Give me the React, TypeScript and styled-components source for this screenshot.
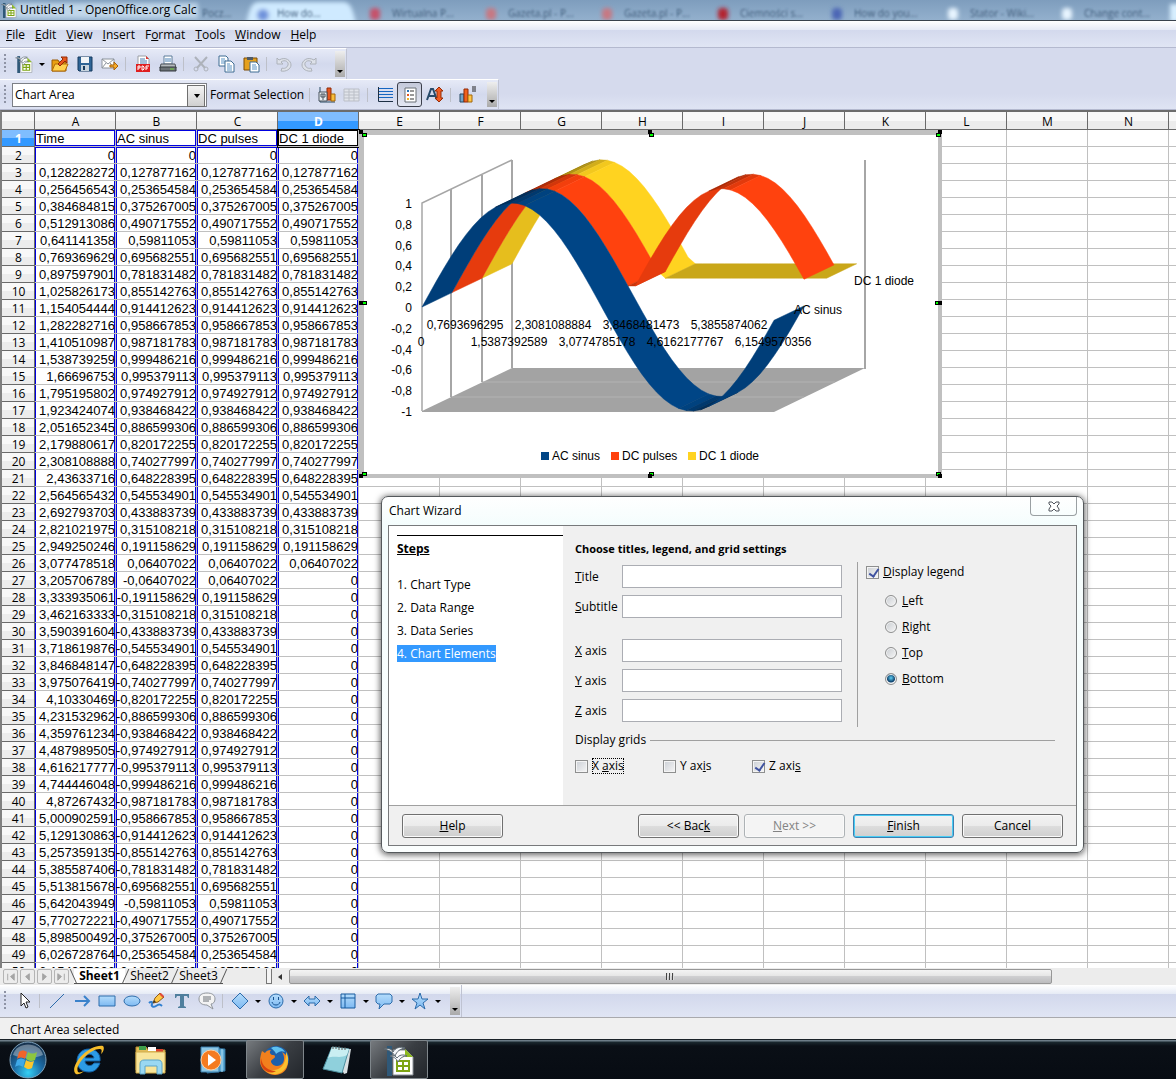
import React, { useState } from 'react';
import styled, { createGlobalStyle, css } from 'styled-components';

const UI_FONT = '"Open Sans", "Noto Sans", sans-serif';
const CELL_FONT = '"Liberation Sans", Arial, sans-serif';

const COLUMNS = ['A', 'B', 'C', 'D', 'E', 'F', 'G', 'H', 'I', 'J', 'K', 'L', 'M', 'N', 'O'];
const HEADINGS = ['Time', 'AC sinus', 'DC pulses', 'DC 1 diode'];
const SAMPLES = 49;
const STEP = (2 * Math.PI) / SAMPLES;

// one full period, t goes from 0 up to just before 2π
const times = Array.from({ length: SAMPLES }, (_, i) => i * STEP);
const fullWave = (t: number) => Math.sin(t);
const rectified = (t: number) => Math.abs(Math.sin(t));
const halfWave = (t: number) => Math.max(0, Math.sin(t));

const formatNumber = (value: number) => String(Number(value.toFixed(9))).replace('.', ',');

const dataRows = times.map((t) => [t, fullWave(t), rectified(t), halfWave(t)].map(formatNumber));

const GlobalStyle = createGlobalStyle`
  * {
    box-sizing: border-box;
  }

  body {
    margin: 0;
    overflow: hidden;
    background: #efefef;
  }

  button, input, select {
    font: inherit;
    color: inherit;
  }
`;

/* ---------- icons ---------- */

const OfficeMark = ({ size = 18 }: { size?: number }) => (
  <svg width={size} height={size} viewBox="0 0 32 32" aria-hidden="true">
    <rect x="4" y="2" width="5" height="30" fill="#2f5878" />
    <path d="M10 6h13l7 7v18H10z" fill="#fdfdfd" stroke="#8a9096" />
    <path d="M22 5l8 8h-8z" fill="#8dbb1e" />
    <path d="M13 16h14v12H13z" fill="#7da414" />
    <path d="M15 18h4v3h-4zM21 18h4v3h-4zM15 23h4v3h-4zM21 23h4v3h-4z" fill="#fff" />
    <path d="M1 5c5-1 8 0 9 3 2-4 7-6 12-4-5 1-8 3-10 8-2-4-6-6-11-7z" fill="#f4f7fa" stroke="#59656e" />
    <path d="M7 12c4-1 6 0 7 2 2-3 6-4 10-2-4 0-7 2-9 6-2-4-4-5-8-6z" fill="#f4f7fa" stroke="#59656e" />
  </svg>
);

const blue = '#7db9f2';
const navy = '#2d6cab';

const drawings = {
  open: (
    <>
      <path d="M1 5h6l1 2h7v9H1z" fill="#e9a013" stroke="#9a5a05" />
      <path d="M1 16l3-7h13l-3 7z" fill="#ffd24f" stroke="#b06a08" />
      <path d="M7 9l5-5-2-2h6v6l-2-2-5 5z" fill="#e8581c" stroke="#932a05" />
    </>
  ),
  save: (
    <>
      <path d="M2 2h14v14H3l-1-1z" fill="#2f6596" stroke="#173b5e" />
      <path d="M5 2h8v6H5z" fill="#f2f5f8" />
      <path d="M5 10h8v6H5z" fill="#c9d5df" />
      <path d="M7 11h2v4H7z" fill="#173b5e" />
    </>
  ),
  mail: (
    <>
      <path d="M1 4h12v9H1z" fill="#fff" stroke="#8d949c" />
      <path d="M1 4l6 5 6-5M1 13l4-5M13 13L9 8" fill="none" stroke="#8d949c" />
      <path d="M9 10h4V7l4 4-4 4v-3H9z" fill="#f6ac2c" stroke="#a9620a" />
    </>
  ),
  pdf: (
    <>
      <path d="M4 1h8l3 3v8H4z" fill="#fff" stroke="#9a9fa5" />
      <path d="M6 4h5M6 6h7M6 8h7" stroke="#4d7fb0" />
      <path d="M12 1l3 3h-3z" fill="#e03a33" />
      <path d="M2 9h14v8H2z" fill="#df1f1f" />
      <path d="M4 15v-4h2v2H4M8 11v4h1l1-1v-2l-1-1zM12 15v-4h3M12 13h2" fill="none" stroke="#fff" />
    </>
  ),
  print: (
    <>
      <path d="M5 1h8v8H5z" fill="#fff" stroke="#5c7c9a" />
      <path d="M6 4h6M6 6h6" stroke="#4b82b8" />
      <path d="M2 9h14l1 4H1z" fill="#b4b9bd" stroke="#4c5258" />
      <path d="M1 12h16v4H1z" fill="#6c7277" stroke="#33383c" />
      <path d="M11 14h4" stroke="#73d13d" />
    </>
  ),
  cut: (
    <g fill="none" stroke="#adb2ba">
      <path d="M3 2l10 11M15 2L5 13" strokeWidth="2" />
      <circle cx="4" cy="14" r="2" />
      <circle cx="14" cy="14" r="2" />
    </g>
  ),
  copy: (
    <>
      <path d="M2 1h7l2 2v8H2z" fill="#fff" stroke="#3f6d93" />
      <path d="M4 4h4M4 6h5M4 8h5" stroke="#5b93c5" />
      <path d="M8 6h6l3 3v8H8z" fill="#fff" stroke="#3f6d93" />
      <path d="M10 9h3M10 11h5M10 13h5M10 15h5" stroke="#5b93c5" />
    </>
  ),
  paste: (
    <>
      <path d="M2 3h13v12H2z" fill="#e5a11e" stroke="#7d4c06" />
      <path d="M5 2h6v3H5z" fill="#505a63" />
      <path d="M8 7h6l3 3v7H8z" fill="#fff" stroke="#3f6d93" />
      <path d="M10 10h4M10 12h5M10 14h5" stroke="#5b93c5" />
    </>
  ),
  undo: (
    <path d="M2 3v6h6L6 7c4-3 8 0 7 3s-4 4-6 3l-1 3c5 1 10-2 10-6S11 1 4 5z" fill="#dde1e9" stroke="#adb2ba" />
  ),
  redo: (
    <path d="M16 3v6h-6l2-2c-4-3-8 0-7 3s4 4 6 3l1 3c-5 1-10-2-10-6S7 1 14 5z" fill="#dde1e9" stroke="#adb2ba" />
  ),
  chartType: (
    <>
      <path d="M2 1v15h15" fill="none" stroke="#274862" />
      <path d="M9 2h4v12H9z" fill="#e4571f" stroke="#912b06" />
      <path d="M13 8h4v7h-4z" fill="#f9bd3c" stroke="#a2660a" />
      <path d="M1 6h8v9H1z" fill="#e9eef2" stroke="#48535d" />
      <path d="M5 8v6M3 8h4v3H3z" fill="none" stroke="#48535d" />
    </>
  ),
  table: (
    <g fill="#e1e4ea" stroke="#bbbfc7">
      <path d="M1 3h15v12H1z" />
      <path d="M1 6h15M1 9h15M1 12h15M6 3v12M11 3v12" />
    </g>
  ),
  hgrid: (
    <>
      <path d="M3 2.5h14M3 5.5h14M3 8.5h14M3 11.5h14" stroke="#1565c0" />
      <path d="M2.5 1v14.5H17" fill="none" stroke="#1c2f44" />
    </>
  ),
  legend: (
    <>
      <path d="M4 2h11v14H4z" fill="#fff" stroke="#6b7076" />
      <path d="M9 5h4M9 9h4M9 13h4" stroke="#333" />
      <path d="M6 4h2v2H6z" fill="#2974ba" />
      <path d="M6 8h2v2H6z" fill="#e4571f" />
      <path d="M6 12h2v2H6z" fill="#f0b429" />
    </>
  ),
  scale: (
    <>
      <path d="M1 14l4-11h2l4 11M3 10h6" fill="none" stroke="#284b6b" strokeWidth="2" />
      <path d="M13 1l4 4h-2v7h2l-4 4-4-4h2V5H9z" fill="#f05c25" stroke="#982c05" />
    </>
  ),
  bars: (
    <>
      <path d="M1 8h4v8H1z" fill="#6fa3c9" stroke="#274862" />
      <path d="M5 3h4v13H5z" fill="#f0601c" stroke="#912b06" />
      <path d="M9 9h4v7H9z" fill="#ffc545" stroke="#a2660a" />
      <path d="M13 1h4M13 3h4M13 5h4" stroke="#222" />
    </>
  ),
  pointer: <path d="M6 1v13l3-3 2 5 2-1-2-5h4z" fill="#fff" stroke="#222" />,
  line: <path d="M2 16L16 2" stroke={navy} strokeWidth="1" />,
  arrow: <path d="M2 9h14M11 4l5 5-5 5" fill="none" stroke="#3a82cb" strokeWidth="2" />,
  rect: <path d="M1 4h16v10H1z" fill="url(#shapeBlue)" stroke={navy} />,
  ellipse: <ellipse cx="9" cy="9" rx="8" ry="5" fill="url(#shapeBlue)" stroke={navy} />,
  pencil: (
    <>
      <path d="M1 11c2-2 4-1 3 1s1 4 4 2 4-2 6 0" fill="none" stroke="#2f7fd0" strokeWidth="2" />
      <path d="M5 11l2-5 5-5 4 4-6 5z" fill="#ffc845" stroke="#8f5c10" />
      <path d="M11 2l2-1 3 3-1 2z" fill="#e04c3c" />
      <path d="M5 11l1-3 2 2z" fill="#333" />
    </>
  ),
  text: <path d="M2 2h14v4h-1l-1-2h-3v10l2 1v1H5v-1l2-1V4H4L3 6H2z" fill="#4f7f9d" />,
  note: (
    <>
      <path d="M9 1c5 0 8 2 8 6 0 3-2 5-4 5l2 5-6-4c-5 0-8-2-8-6s3-6 8-6z" fill="#f3f3f3" stroke="#90959b" />
      <path d="M5 5h8M5 7h8M5 9h6" stroke="#6b7177" />
    </>
  ),
  diamond: <path d="M9 1l8 8-8 8-8-8z" fill="url(#shapeBlue)" stroke={navy} />,
  smiley: (
    <>
      <circle cx="9" cy="9" r="7" fill="url(#shapeBlue)" stroke={navy} />
      <path d="M5 10c1 4 7 4 8 0" fill="none" stroke="#17518e" />
      <path d="M6 5h1v3H6zM11 5h1v3h-1z" fill="#17518e" />
    </>
  ),
  doubleArrow: <path d="M1 9l5-5v3h6V4l5 5-5 5v-3H6v3z" fill="url(#shapeBlue)" stroke={navy} />,
  flowchart: (
    <>
      <path d="M2 2h14v14H2z" fill="url(#shapeBlue)" stroke="#175a9e" />
      <path d="M6 2v14M2 6h14" stroke="#175a9e" />
    </>
  ),
  callout: <path d="M3 2h12l2 2v6l-2 2H9l-5 5 1-5H3l-2-2V4z" fill="url(#shapeBlue)" stroke={navy} />,
  star: <path d="M9 1l2 6h6l-5 4 2 6-5-4-5 4 2-6-5-4h6z" fill="url(#shapeBlue)" stroke={navy} />,
};

type IconName = keyof typeof drawings | 'new';

const Icon = ({ name }: { name: IconName }) =>
  name === 'new' ? (
    <OfficeMark />
  ) : (
    <svg width="18" height="18" viewBox="0 0 18 18" aria-hidden="true">
      {drawings[name]}
    </svg>
  );

/* ---------- toolbars ---------- */

const toolLabels: Record<string, string> = { new: 'New', open: 'Open', save: 'Save', mail: 'E-mail', pdf: 'Export PDF' };

type ToolItem = { icon?: IconName; menu?: boolean; pressed?: boolean; separator?: boolean };

const standardTools: ToolItem[] = [
  { icon: 'new', menu: true },
  { icon: 'open' },
  { icon: 'save' },
  { icon: 'mail' },
  { separator: true },
  { icon: 'pdf' },
  { icon: 'print' },
  { separator: true },
  { icon: 'cut' },
  { icon: 'copy' },
  { icon: 'paste' },
  { separator: true },
  { icon: 'undo' },
  { icon: 'redo' },
];

const chartTools: ToolItem[] = [
  { separator: true },
  { icon: 'chartType' },
  { icon: 'table' },
  { separator: true },
  { icon: 'hgrid' },
  { icon: 'legend', pressed: true },
  { icon: 'scale' },
  { separator: true },
  { icon: 'bars' },
];

const drawTools: ToolItem[] = [
  { icon: 'pointer' },
  { separator: true },
  { icon: 'line' },
  { icon: 'arrow' },
  { icon: 'rect' },
  { icon: 'ellipse' },
  { icon: 'pencil' },
  { icon: 'text' },
  { icon: 'note' },
  { separator: true },
  { icon: 'diamond', menu: true },
  { icon: 'smiley', menu: true },
  { icon: 'doubleArrow', menu: true },
  { icon: 'flowchart', menu: true },
  { icon: 'callout', menu: true },
  { icon: 'star', menu: true },
];

const Tools = ({ items }: { items: ToolItem[] }) => (
  <>
    {items.map((item, index) =>
      item.separator || !item.icon ? (
        <Separator key={index} />
      ) : (
        <React.Fragment key={index}>
          <ToolButton $pressed={item.pressed} aria-label={toolLabels[item.icon] || item.icon}>
            <Icon name={item.icon} />
          </ToolButton>
          {item.menu && <DropArrow aria-label={`${item.icon} options`} />}
        </React.Fragment>
      )
    )}
  </>
);

/* ---------- chart ---------- */

const FRONT_X = 422;
const ZERO_Y = 307;
const UNIT_Y = 104;
const PX_PER_T = 352 / times[SAMPLES - 1];
const DEPTH_X = 30;
const DEPTH_Y = 14.4;

const shade = (rgb: number[], k: number) => `rgb(${rgb.map((c) => Math.round(c * k)).join(',')})`;

type RibbonProps = { fn: (t: number) => number; depth: number; rgb: number[]; count: number };

const Ribbon = ({ fn, depth, rgb, count }: RibbonProps) => {
  const point = (i: number, d: number) => [
    FRONT_X + times[i] * PX_PER_T + DEPTH_X * d,
    ZERO_Y - fn(times[i]) * UNIT_Y - DEPTH_Y * d,
  ];

  // neighbouring facets with the same light are drawn as one strip, so no seams show
  const strips: { color: string; from: number; to: number }[] = [];
  for (let i = 0; i < count - 1; i++) {
    const slope = (fn(times[i + 1]) - fn(times[i])) / STEP;
    // steeper than the depth axis means the underside faces the viewer
    const light = slope > 0.262 ? 0.9 : Math.min(1, Math.max(0.5, 0.79 - slope));
    const color = shade(rgb, light);
    const last = strips[strips.length - 1];
    if (last && last.color === color) {
      last.to = i + 1;
    } else {
      strips.push({ color, from: i, to: i + 1 });
    }
  }

  return (
    <g strokeWidth="0.5" strokeLinejoin="round">
      {strips.map(({ color, from, to }) => {
        const indexes = Array.from({ length: to - from + 1 }, (_, k) => from + k);
        const front = indexes.map((i) => point(i, depth));
        const back = indexes.map((i) => point(i, depth + 1)).reverse();
        return <polygon key={from} points={[...front, ...back].join(' ')} fill={color} stroke={color} />;
      })}
    </g>
  );
};

const yLabels = ['1', '0,8', '0,6', '0,4', '0,2', '0', '-0,2', '-0,4', '-0,6', '-0,8', '-1'];
const upperLabels = ['0,7693696295', '2,3081088884', '3,8468481473', '5,3855874062'];
const lowerLabels = ['0', '1,5387392589', '3,0774785178', '4,6162177767', '6,1549570356'];
const legend = [
  { name: 'AC sinus', color: '#004586', x: 541 },
  { name: 'DC pulses', color: '#ff420e', x: 611 },
  { name: 'DC 1 diode', color: '#ffd320', x: 688 },
];
const handles = [
  [359, 130, 3, 3],
  [648, 130, 1, 3],
  [938, 130, -2, 3],
  [359, 301, 3, 0],
  [938, 301, -3, 0],
  [359, 474, 3, -2],
  [648, 474, 1, -2],
  [938, 474, -2, -2],
];

const Chart = () => (
  <ChartFrame viewBox="359 130 583 348" role="img" aria-label="AC sinus, DC pulses and DC 1 diode">
    <rect x="359" y="130" width="583" height="348" fill="#c0c0c0" />
    <rect x="364" y="135" width="574" height="339" fill="#fff" />
    <path d="M422 411L512 368H865L774 412H422z" fill="#a3a3a3" />
    <path d="M452 397H804M482 382H835" stroke="#b3b3b3" />
    <path d="M422 411V203L512 160" fill="none" stroke="#a6a6a6" strokeWidth="1.5" />
    <path d="M451 397V189M482 382V175M512 368V160M865 160V369" fill="none" stroke="#a6a6a6" strokeWidth="2" />
    <Ribbon fn={halfWave} depth={2} rgb={[255, 211, 32]} count={48} />
    <Ribbon fn={rectified} depth={1} rgb={[255, 66, 14]} count={49} />
    <Ribbon fn={fullWave} depth={0} rgb={[0, 69, 134]} count={49} />
    {yLabels.map((label, i) => (
      <text key={label} x="412" y={Math.round(208 + i * 20.8)} textAnchor="end">
        {label}
      </text>
    ))}
    {upperLabels.map((label, i) => (
      <text key={label} x={465 + i * 88} y="329" textAnchor="middle">
        {label}
      </text>
    ))}
    {lowerLabels.map((label, i) => (
      <text key={label} x={421 + i * 88} y="346" textAnchor="middle">
        {label}
      </text>
    ))}
    <text x="854" y="285">DC 1 diode</text>
    <text x="794" y="314">AC sinus</text>
    {legend.map((entry) => (
      <g key={entry.name}>
        <rect x={entry.x} y="452" width="8" height="8" fill={entry.color} />
        <text x={entry.x + 11} y="460">{entry.name}</text>
      </g>
    ))}
    {handles.map(([x, y, dx, dy]) => (
      <g key={`${x}-${y}`}>
        <rect x={x + dx} y={y + dy} width="5" height="4" fill="#000" />
        <rect x={x + dx + 1} y={y + dy + 1} width="3" height="2" fill="#0f0" />
        <rect x={x} y={y} width="4" height="4" fill="#000" />
      </g>
    ))}
  </ChartFrame>
);

/* ---------- wizard ---------- */

const steps = ['1. Chart Type', '2. Data Range', '3. Data Series', '4. Chart Elements'];

// underlines the keyboard mnemonic
const Mnemonic = ({ text, at = 0 }: { text: string; at?: number }) => (
  <span>
    {text.slice(0, at)}
    <u>{text[at]}</u>
    {text.slice(at + 1)}
  </span>
);

const ChartWizard = () => {
  const [legendOn, setLegendOn] = useState(true);
  const [placement, setPlacement] = useState('Bottom');

  return (
    <Dialog role="dialog" aria-label="Chart Wizard">
      <DialogTitle>
        <span>Chart Wizard</span>
        <CloseButton aria-label="Close">
          <svg width="12" height="11" viewBox="0 0 12 11" aria-hidden="true">
            <path d="M1 1h3l2 2 2-2h3v2L9 5l2 3v2H8L6 8l-2 2H1V8l2-3-2-2z" fill="#fff" stroke="#50545c" />
          </svg>
        </CloseButton>
      </DialogTitle>
      <DialogBody>
        <DialogMain>
          <StepsPanel>
            <StepsTitle>Steps</StepsTitle>
            {steps.map((step, index) => (
              <Step key={step} $active={index === 3}>
                {step}
              </Step>
            ))}
          </StepsPanel>
          <Settings>
            <SettingsTitle>Choose titles, legend, and grid settings</SettingsTitle>
            <SettingsColumns>
              <Fields>
                {['Title', 'Subtitle', 'X axis', 'Y axis', 'Z axis'].map((name) => (
                  <Field key={name} $spaced={name === 'X axis'}>
                    <Mnemonic text={name} />
                    <TextBox type="text" />
                  </Field>
                ))}
              </Fields>
              <LegendOptions>
                <Option>
                  <CheckBox type="checkbox" checked={legendOn} onChange={() => setLegendOn(!legendOn)} />
                  <Mnemonic text="Display legend" />
                </Option>
                <Placements>
                  {['Left', 'Right', 'Top', 'Bottom'].map((side) => (
                    <Option key={side}>
                      <Radio
                        type="radio"
                        name="placement"
                        checked={placement === side}
                        onChange={() => setPlacement(side)}
                      />
                      <Mnemonic text={side} />
                    </Option>
                  ))}
                </Placements>
              </LegendOptions>
            </SettingsColumns>
            <GroupTitle>Display grids</GroupTitle>
            <GridOptions>
              <Option $focused>
                <CheckBox type="checkbox" />
                <Mnemonic text="X axis" at={2} />
              </Option>
              <Option>
                <CheckBox type="checkbox" />
                <Mnemonic text="Y axis" at={4} />
              </Option>
              <Option>
                <CheckBox type="checkbox" defaultChecked />
                <Mnemonic text="Z axis" at={5} />
              </Option>
            </GridOptions>
          </Settings>
        </DialogMain>
        <DialogButtons>
          <PushButton><Mnemonic text="Help" /></PushButton>
          <Spacer />
          <PushButton><Mnemonic text="<< Back" at={6} /></PushButton>
          <PushButton disabled><Mnemonic text="Next >>" /></PushButton>
          <PushButton $primary $apart><Mnemonic text="Finish" /></PushButton>
          <PushButton $apart>Cancel</PushButton>
        </DialogButtons>
      </DialogBody>
    </Dialog>
  );
};

/* ---------- title bar backdrop ---------- */

const blurredTabs = [
  { x: 366, label: 'Wirtualna P...', color: '#c6516a' },
  { x: 482, label: 'Gazeta.pl - P...', color: '#c77882' },
  { x: 598, label: 'Gazeta.pl - P...', color: '#c77882' },
  { x: 714, label: 'Ciemności s...', color: '#b3202f' },
  { x: 828, label: 'How do you...', color: '#4b66b5' },
  { x: 944, label: 'Stator - Wiki...', color: '#e8f5ff' },
  { x: 1058, label: 'Change cont...', color: '#e8f5ff' },
];

const Backdrop = () => (
  <BackdropSvg aria-hidden="true">
    <defs>
      <filter id="glass" x="-10%" y="-50%" width="120%" height="200%">
        <feGaussianBlur stdDeviation="2" />
      </filter>
      <filter id="glassText" x="-10%" y="-50%" width="120%" height="200%">
        <feGaussianBlur stdDeviation="1" />
      </filter>
    </defs>
    <g filter="url(#glass)">
      <rect x="14" y="3" width="184" height="15" fill="#d3e5f5" opacity="0.75" />
      <path d="M246 24c4-18 6-22 14-22h82c8 0 10 4 14 22z" fill="#cfeaff" />
      <circle cx="263" cy="15" r="6" fill="#6f93dc" />
      {blurredTabs.map((tab) => (
        <rect key={tab.x} x={tab.x + 4} y="8" width="10" height="12" rx="4" fill={tab.color} />
      ))}
      <rect x="1170" y="4" width="10" height="18" fill="#d8efff" />
    </g>
    <g filter="url(#glassText)" fontSize="10" fill="#3f5b79">
      <text x="202" y="17">Pocz...</text>
      <text x="277" y="17">How do...</text>
      {blurredTabs.map((tab) => (
        <text key={tab.x} x={tab.x + 26} y="17">{tab.label}</text>
      ))}
    </g>
  </BackdropSvg>
);

/* ---------- taskbar ---------- */

const StartOrb = () => (
  <svg width="38" height="38" viewBox="0 0 38 38" aria-hidden="true">
    <defs>
      <radialGradient id="orb" cx="50%" cy="85%" r="80%">
        <stop offset="0" stopColor="#35d0f5" />
        <stop offset="0.5" stopColor="#1c6ba5" />
        <stop offset="1" stopColor="#16324e" />
      </radialGradient>
    </defs>
    <circle cx="19" cy="19" r="18" fill="url(#orb)" stroke="#7fa3bd" />
    <path d="M4 14c3-14 27-14 30 0-9 4-21 4-30 0z" fill="#fff" opacity="0.35" />
    <path d="M10 11c3-2 5-2 8 0l-2 7c-3-2-5-2-8 0z" fill="#f0652a" />
    <path d="M19 11c3 2 6 2 9 0l-2 8c-3 2-6 1-9-1z" fill="#8dc63f" />
    <path d="M8 19c3-2 5-2 8 0l-2 7c-3-2-5-2-8 0z" fill="#3fa9e8" />
    <path d="M17 19c3 2 5 2 8 1l-2 7c-3 2-5 1-8-1z" fill="#fcc62d" />
  </svg>
);

const Explorer = () => (
  <svg width="34" height="32" viewBox="0 0 34 32" aria-hidden="true">
    <path
      d="M17 5c7 0 12 5 11 12H13c0 5 7 6 9 2h6c-2 6-6 9-11 9-8 0-12-5-12-11S9 5 17 5zm-4 9h9c-1-5-8-5-9 0z"
      fill="#2c9be6"
      stroke="#1361a6"
    />
    <path d="M3 29C-2 22 16 0 31 2c2 2 0 7-2 8 1-3 1-5-1-5C19 4 2 21 6 28c1 1 4 0 6-1-4 4-8 4-9 2z" fill="#f6bd2a" />
  </svg>
);

const Folders = () => (
  <svg width="34" height="32" viewBox="0 0 34 32" aria-hidden="true">
    <path d="M2 3h10l2 3h17v20H2z" fill="#e2bd58" stroke="#b78e30" />
    <path d="M5 2h7v4H5z" fill="#3f9f4b" />
    <path d="M14 3h8v4h-8z" fill="#fff" />
    <path d="M22 5h7v3h-7z" fill="#d8402a" />
    <path d="M2 8h29v21H2z" fill="#f8e59a" stroke="#d0ac4c" />
    <path d="M6 30V20c0-3 2-4 4-4h14c3 0 4 2 4 4v10h-5v-8H11v8z" fill="#9ad8f2" stroke="#5aa4c8" />
  </svg>
);

const MediaPlayer = () => (
  <svg width="32" height="30" viewBox="0 0 32 30" aria-hidden="true">
    <path d="M10 3l18 1v22l-18 2z" fill="#5aa8d4" stroke="#2f6f99" />
    <path d="M25 4v23" stroke="#b5e1f6" />
    <path d="M4 2h18v25H4z" fill="#8cc7e6" stroke="#3b7fab" />
    <circle cx="14" cy="15" r="10" fill="#f47b20" stroke="#fbd0a4" />
    <path d="M11 9l8 6-8 6z" fill="#fff" />
  </svg>
);

const Firefox = () => (
  <svg width="32" height="32" viewBox="0 0 32 32" aria-hidden="true">
    <circle cx="17" cy="15" r="13" fill="#1d5fa8" />
    <path d="M12 4c5-3 12 0 14 4-4-2-7 0-9 2-1-3-3-4-5-6z" fill="#5fc0ee" />
    <path
      d="M3 7l3 2c1-2 3-3 6-3-2 2-1 4 1 5 2 0 3 0 3 2-1 2-4 2-4 5 2 5 9 5 12 1 2-4 1-8-1-11 5 3 6 6 6 10 0 8-6 13-13 13S1 25 1 17c0-4 1-7 2-10z"
      fill="#f2801d"
    />
    <path d="M27 8c5 8 1 20-9 22-6 1-12-2-15-8 6 6 18 6 22-3 2-4 2-8 2-11z" fill="#fbc02f" />
    <path d="M2 14c1 8 7 13 15 13-8 5-17-3-15-13z" fill="#d9430f" />
  </svg>
);

const Notepad = () => (
  <svg width="30" height="30" viewBox="0 0 30 30" aria-hidden="true">
    <path d="M10 3l19 1-4 24-3 1z" fill="#d8dfe2" />
    <path d="M10 2l17 2-7 24-19-4z" fill="#8fd0dc" stroke="#4c8e9e" />
    <path d="M10 2l17 2-2 6C18 14 12 10 6 13z" fill="#c9eef2" />
    <path d="M11 1v3M14 1v3M17 1v4M20 2v3M23 2v3" stroke="#555" />
  </svg>
);

export default function App() {
  return (
    <Window>
      <GlobalStyle />
      <SharedDefs aria-hidden="true">
        <linearGradient id="shapeBlue" x1="0" y1="0" x2="0" y2="1">
          <stop offset="0" stopColor="#b4dcfb" />
          <stop offset="1" stopColor={blue} />
        </linearGradient>
      </SharedDefs>
      <TitleBar>
        <Backdrop />
        <OfficeMark size={16} />
        <TitleText>Untitled 1 - OpenOffice.org Calc</TitleText>
      </TitleBar>
      <MenuBar>
        {['File', 'Edit', 'View', 'Insert', 'Format', 'Tools', 'Window', 'Help'].map((name) => (
          <MenuItem key={name}>
            <Mnemonic text={name} at={name === 'Format' ? 1 : 0} />
          </MenuItem>
        ))}
      </MenuBar>
      <ToolRow>
        <ToolBar>
          <Grip />
          <Tools items={standardTools} />
          <Overflow aria-label="More tools" $wide />
        </ToolBar>
      </ToolRow>
      <ToolRow $last>
        <ToolBar>
          <Grip />
          <SelectBox>
            <select aria-label="Chart element" defaultValue="Chart Area">
              <option>Chart Area</option>
            </select>
          </SelectBox>
          <FormatButton>Format Selection</FormatButton>
          <Tools items={chartTools} />
          <Overflow aria-label="More chart tools" />
        </ToolBar>
      </ToolRow>

      <Sheet>
        <Grid>
          <thead>
            <tr>
              <CornerCell />
              {COLUMNS.map((name) => (
                <ColumnHeader key={name} $active={name === 'D'}>
                  {name}
                </ColumnHeader>
              ))}
            </tr>
          </thead>
          <tbody>
            <tr>
              <RowHeader $active>1</RowHeader>
              {COLUMNS.map((name, index) => (
                <Cell key={name} $range={index < 4} $heading $current={index === 3}>
                  {HEADINGS[index]}
                </Cell>
              ))}
            </tr>
            {dataRows.map((row, rowIndex) => (
              <tr key={rowIndex}>
                <RowHeader>{rowIndex + 2}</RowHeader>
                {COLUMNS.map((name, index) => (
                  <Cell key={name} $range={index < 4} $first={rowIndex === 0}>
                    {row[index]}
                  </Cell>
                ))}
              </tr>
            ))}
          </tbody>
        </Grid>
        <Chart />
        <ChartWizard />
      </Sheet>

      <SheetBar>
        {['M5 4v7M12 4L8 7l4 4z', 'M10 4L6 7l4 4z', 'M6 4l4 3-4 4z', 'M4 4l4 3-4 4zM11 4v7'].map((d, index) => (
          <NavButton key={d} aria-label={['First', 'Previous', 'Next', 'Last'][index]}>
            <svg width="15" height="14" viewBox="0 0 16 15" aria-hidden="true">
              <path d={d} fill="#a5a5a5" stroke="#a5a5a5" />
            </svg>
          </NavButton>
        ))}
        <Tabs>
          {['Sheet1', 'Sheet2', 'Sheet3'].map((name, index) => (
            <Tab key={name} $active={index === 0}>
              {name}
            </Tab>
          ))}
        </Tabs>
        <Splitter />
        <ScrollArrow aria-label="Scroll left" />
        <ScrollTrack>
          <ScrollThumb>
            <i />
            <i />
            <i />
          </ScrollThumb>
        </ScrollTrack>
      </SheetBar>
      <DrawRow>
        <ToolBar $plain>
          <Grip />
          <Tools items={drawTools} />
          <Overflow aria-label="More drawing tools" />
        </ToolBar>
      </DrawRow>
      <StatusBar>Chart Area selected</StatusBar>
      <Taskbar>
        <Task aria-label="Start"><StartOrb /></Task>
        <Task aria-label="Internet Explorer"><Explorer /></Task>
        <Task aria-label="Windows Explorer"><Folders /></Task>
        <Task aria-label="Media Player"><MediaPlayer /></Task>
        <Task aria-label="Firefox" $running><Firefox /></Task>
        <Task aria-label="Notepad"><Notepad /></Task>
        <Task aria-label="OpenOffice" $running><OfficeMark size={32} /></Task>
      </Taskbar>
    </Window>
  );
}

/* ---------- styles ---------- */

const Window = styled.div`
  display: flex;
  flex-direction: column;
  height: 100vh;
  font: 12px/16px ${UI_FONT};
  color: #000;

  button {
    padding: 0;
    border: 0;
    background: none;
  }
`;

const SharedDefs = styled.svg`
  position: absolute;
  width: 0;
  height: 0;
`;

const TitleBar = styled.header`
  position: relative;
  display: flex;
  align-items: center;
  gap: 3px;
  height: 21px;
  padding-left: 1px;
  overflow: hidden;
  border-bottom: 1px solid #39424c;
  background: linear-gradient(#7e9dbd, #93b0cd);
`;

const BackdropSvg = styled.svg`
  position: absolute;
  inset: 0;
  width: 100%;
  height: 100%;

  & ~ * {
    position: relative;
  }
`;

const TitleText = styled.h1`
  margin: 0;
  font-size: 12px;
  font-weight: 400;
`;

const MenuBar = styled.nav`
  display: flex;
  align-items: center;
  gap: 10px;
  height: 27px;
  padding: 2px 0 0 6px;
  border-bottom: 1px solid #b4b9cf;
  background: linear-gradient(#fff, #e6eaf6 34%, #d3d9ed 35%, #e0e5f4);
`;

const MenuItem = styled.button``;

const ToolRow = styled.div<{ $last?: boolean }>`
  display: flex;
  height: 31px;
  background: ${({ $last }) => ($last ? 'linear-gradient(#d5daed 50%, #dfe4f4)' : '#d5daed')};
  border-bottom: ${({ $last }) => ($last ? '1px solid #b4b9cf' : '0')};
`;

const ToolBar = styled.div<{ $plain?: boolean }>`
  display: flex;
  align-items: center;
  padding-left: 4px;
  border-top: ${({ $plain }) => ($plain ? '0' : '1px solid #fff')};
  border-right: 1px solid #bfc3d2;
  background: ${({ $plain }) => ($plain ? 'none' : 'linear-gradient(#e6eaf7, #d3d9ed 50%, #dde2f3)')};
`;

const Grip = styled.span`
  width: 2px;
  height: 20px;
  margin-right: 5px;
  background: repeating-linear-gradient(#8e93a5 0 2px, transparent 2px 4px);
`;

const ToolButton = styled.button<{ $pressed?: boolean }>`
  display: flex;
  align-items: center;
  justify-content: center;
  width: 25px;
  height: 25px;

  ${({ $pressed }) =>
    $pressed &&
    css`
      && {
        border: 1px solid #3b3f4b;
        border-radius: 3px;
        background: linear-gradient(#c4c9da, #e3e7f3);
      }
    `}
`;

const DropArrow = styled.button`
  width: 11px;
  height: 24px;

  &::before {
    content: '';
    display: block;
    width: 0;
    margin: 0 auto;
    border: 3px solid transparent;
    border-top-color: #000;
    border-bottom: 0;
  }
`;

const Separator = styled.span`
  width: 1px;
  height: 14px;
  margin: 0 4px 0 3px;
  background: #bdc0c9;
`;

const Overflow = styled.button<{ $wide?: boolean }>`
  align-self: stretch;
  display: flex;
  align-items: flex-end;
  justify-content: center;
  width: 10px;
  margin: 2px 1px 2px ${({ $wide }) => ($wide ? '14px' : '7px')};

  && {
    background: linear-gradient(#eee, #aaa);
  }

  &::before {
    content: '';
    margin-bottom: 4px;
    border: 3px solid transparent;
    border-top-color: #000;
    border-bottom: 0;
  }
`;

const SelectBox = styled.div`
  position: relative;
  width: 195px;
  height: 24px;
  margin-left: 1px;
  border: 1px solid #7c7f86;
  background: #fff;

  select {
    width: 100%;
    height: 100%;
    padding: 0 20px 0 2px;
    border: 0;
    background: none;
    appearance: none;
  }

  &::before {
    content: '';
    position: absolute;
    right: 1px;
    top: 1px;
    width: 16px;
    height: 20px;
    border: 1px solid #6f6f6f;
    background: linear-gradient(#f4f4f4, #d0d0d0);
  }

  &::after {
    content: '';
    position: absolute;
    right: 6px;
    top: 10px;
    border: 3px solid transparent;
    border-top: 4px solid #000;
    border-bottom: 0;
  }
`;

const FormatButton = styled.button`
  margin: 0 2px 0 3px;
  white-space: nowrap;
`;

const Sheet = styled.main`
  position: relative;
  flex: 1;
  min-height: 0;
  overflow: hidden;
  border-top: 2px solid #6c6c6c;
  border-left: 2px solid #808080;
  background: #fff;
`;

const Grid = styled.table`
  table-layout: fixed;
  width: 1248px;
  border-spacing: 0;
`;

const headerCell = css`
  padding: 1px 0 0 1px;
  border-right: 1px solid #6a6a6a;
  border-bottom: 1px solid #6a6a6a;
  background: linear-gradient(#f8f8f8 50%, #ececec 50%);
  font: 12px/15px ${UI_FONT};
  text-align: center;
`;

const activeHeader = css`
  background: linear-gradient(#7fbdff 50%, #3399ff 50%);
  color: #fff;
  font-weight: 700;
`;

const CornerCell = styled.td`
  ${headerCell}
  width: 33px;
  height: 18px;
`;

const ColumnHeader = styled.th<{ $active: boolean }>`
  ${headerCell}
  width: 81px;
  height: 18px;
  ${({ $active }) => $active && activeHeader}
`;

const RowHeader = styled.th<{ $active?: boolean }>`
  ${headerCell}
  height: 17px;
  ${({ $active }) => $active && activeHeader}
`;

const rangeShadow = '1px 0 #0000e0, inset -1px 0 #0000e0';

const Cell = styled.td<{ $range: boolean; $heading?: boolean; $first?: boolean; $current?: boolean }>`
  height: 17px;
  padding: ${({ $heading }) => ($heading ? '1px 0 0 1px' : '1px 0 0')};
  border-right: 1px solid #c0c0c0;
  border-bottom: 1px solid #c0c0c0;
  font: 13px/15px ${CELL_FONT};
  text-align: ${({ $heading }) => ($heading ? 'left' : 'right')};
  white-space: nowrap;

  ${({ $range, $heading, $first }) =>
    $range &&
    css`
      box-shadow: inset ${rangeShadow}${$heading ? ', inset 0 1px #0000e0, inset 0 -1px #0000e0' : ''}${$first
        ? ', inset 0 1px #0000e0'
        : ''};
    `}

  ${({ $current }) =>
    $current &&
    css`
      box-shadow: inset 0 0 0 1px #000;
      outline: 1px solid #000;
    `}
`;

const ChartFrame = styled.svg`
  position: absolute;
  left: 357px;
  top: 18px;
  width: 583px;
  height: 348px;
  font: 12px ${CELL_FONT};
`;

const Dialog = styled.section`
  position: absolute;
  left: 379px;
  top: 384px;
  width: 703px;
  padding: 0 6px 6px;
  border: 1px solid #55595c;
  border-radius: 7px;
  background: linear-gradient(#fff, #f4fdfd 28px, #fbfefe);
  box-shadow: 0 1px 6px 1px rgba(0, 0, 0, 0.6);
`;

const DialogTitle = styled.div`
  display: flex;
  align-items: flex-start;
  justify-content: space-between;
  height: 28px;

  span {
    padding: 6px 0 0 1px;
  }
`;

const CloseButton = styled.button`
  display: flex;
  align-items: center;
  justify-content: center;
  width: 47px;
  height: 19px;

  && {
    border: 1px solid #9aa0a3;
    border-top: 0;
    border-radius: 0 0 4px 4px;
  }
`;

const DialogBody = styled.div`
  border: 1px solid #77797b;
  background: #f0f0f0;
`;

const DialogMain = styled.div`
  display: flex;
  height: 280px;
  border-bottom: 1px solid #a0a0a0;
`;

const StepsPanel = styled.aside`
  display: flex;
  flex-direction: column;
  align-items: flex-start;
  gap: 6px;
  width: 174px;
  padding: 9px 0 0 8px;
  background: #fff;
`;

const StepsTitle = styled.h2`
  align-self: stretch;
  margin: 0 0 13px;
  padding-top: 4px;
  border-top: 1px solid #000;
  font-size: 12px;
  line-height: 17px;
  text-decoration: underline;
`;

const Step = styled.div<{ $active: boolean }>`
  line-height: 17px;
  background: ${({ $active }) => ($active ? '#3399ff' : 'none')};
  color: ${({ $active }) => ($active ? '#fff' : '#000')};
`;

const Settings = styled.div`
  flex: 1;
  padding: 15px 21px 0 12px;
`;

const SettingsTitle = styled.h2`
  margin: 0;
  font-size: 11px;
  line-height: 16px;
`;

const SettingsColumns = styled.div`
  display: flex;
  gap: 15px;
  margin-top: 5px;
`;

const Fields = styled.div`
  display: flex;
  flex-direction: column;
  gap: 7px;
  width: 267px;
  padding-top: 3px;
`;

const Field = styled.label<{ $spaced: boolean }>`
  display: flex;
  align-items: center;
  justify-content: space-between;
  margin-top: ${({ $spaced }) => ($spaced ? '14px' : '0')};
`;

const TextBox = styled.input`
  width: 220px;
  height: 23px;
  border: 1px solid #abadb3;
  background: #fff;
`;

const LegendOptions = styled.div`
  height: 165px;
  padding: 2px 0 0 8px;
  border-left: 1px solid #a0a0a0;
`;

const Option = styled.label<{ $focused?: boolean }>`
  display: flex;
  align-items: center;
  gap: 4px;

  span {
    outline: ${({ $focused }) => ($focused ? '1px dotted #000' : 'none')};
    outline-offset: -1px;
  }
`;

const Placements = styled.div`
  display: flex;
  flex-direction: column;
  gap: 10px;
  padding: 13px 0 0 19px;
`;

const CheckBox = styled.input`
  appearance: none;
  width: 13px;
  height: 13px;
  margin: 0;
  border: 1px solid #8e8f8f;
  background: linear-gradient(135deg, #cbcfd5, #f6f6f6);
  box-shadow: inset 0 0 0 1px #f4f4f4;

  &:checked::after {
    content: '';
    display: block;
    width: 4px;
    height: 8px;
    margin: 0 0 0 4px;
    border: solid #3f52a0;
    border-width: 0 2px 2px 0;
    transform: rotate(35deg);
  }
`;

const Radio = styled.input`
  appearance: none;
  width: 12px;
  height: 12px;
  margin: 0 1px 0 0;
  border: 1px solid #8e8f8f;
  border-radius: 50%;
  background: linear-gradient(135deg, #c8ccd1, #f6f6f6);
  box-shadow: inset 0 0 0 1px #f4f4f4;

  &:checked {
    background: radial-gradient(circle at 5px 4px, #5fd0f5, #0b3c68 4px, #e8eef2 5px);
  }
`;

const GroupTitle = styled.div`
  display: flex;
  align-items: center;
  gap: 4px;
  margin-top: 5px;

  &::after {
    content: '';
    flex: 1;
    height: 1px;
    background: #a0a0a0;
  }
`;

const GridOptions = styled.div`
  display: grid;
  grid-template-columns: 88px 89px auto;
  padding-top: 10px;
`;

const DialogButtons = styled.div`
  display: flex;
  gap: 5px;
  padding: 8px 13px 7px;
`;

const Spacer = styled.div`
  flex: 1;
`;

const PushButton = styled.button<{ $primary?: boolean; $apart?: boolean }>`
  width: 101px;
  height: 24px;
  margin-left: ${({ $apart }) => ($apart ? '3px' : '0')};

  && {
    border: 1px solid ${({ $primary }) => ($primary ? '#3c7fb1' : '#707070')};
    border-radius: 3px;
    background: linear-gradient(#f2f2f2, #ebebeb 50%, #dddddd 50%, #cfcfcf);
    box-shadow: inset 0 0 0 1px ${({ $primary }) => ($primary ? '#48cdf5' : '#fafafa')};
  }

  &&:disabled {
    border-color: #adb2b5;
    background: #f4f4f4;
    color: #838383;
  }
`;

const SheetBar = styled.div`
  display: flex;
  gap: 2px;
  height: 17px;
  padding: 1px 0 1px 3px;
  background: #ececec;
`;

const NavButton = styled.button`
  width: 15px;
  height: 15px;

  && {
    border: 1px solid #b4b4b4;
    border-radius: 2px;
  }

  svg {
    display: block;
    margin: -1px;
  }
`;

const Tabs = styled.div`
  display: flex;
  width: 193px;
  padding-left: 3px;
`;

const Tab = styled.button<{ $active: boolean }>`
  position: relative;
  width: ${({ $active }) => ($active ? '51px' : '49px')};
  height: 15px;
  font-weight: ${({ $active }) => ($active ? 700 : 400)};
  line-height: 14px;

  && {
    background: ${({ $active }) => ($active ? '#fff' : 'none')};
    border-bottom: 1px solid #555;
  }

  &::after {
    content: '';
    position: absolute;
    top: 0;
    right: -1px;
    height: 15px;
    border-right: 1px solid #555;
    transform: skewX(-24deg);
  }

  &:first-child::before {
    content: '';
    position: absolute;
    top: 0;
    left: -1px;
    height: 15px;
    border-right: 1px solid #555;
    transform: skewX(24deg);
  }
`;

const Splitter = styled.span`
  width: 6px;
  border: 1px solid #777;
  border-top: 0;
  background: #f4f4f4;
`;

const ScrollArrow = styled.button`
  width: 13px;

  &::before {
    content: '';
    display: block;
    width: 0;
    margin-left: 4px;
    border: 3px solid transparent;
    border-right: 4px solid #333;
    border-left: 0;
  }
`;

const ScrollTrack = styled.div`
  display: flex;
  flex: 1;
`;

const ScrollThumb = styled.div`
  display: flex;
  align-items: center;
  justify-content: center;
  gap: 1px;
  width: 86%;
  border: 1px solid #979797;
  border-radius: 2px;
  background: linear-gradient(#f4f4f4, #e6e6e6 45%, #cfcfd1 50%, #bcbcbe);

  i {
    width: 2px;
    height: 7px;
    background: linear-gradient(90deg, #444 50%, #ddd 50%);
  }
`;

const DrawRow = styled.div`
  display: flex;
  height: 33px;
  border-bottom: 1px solid #a9a9ad;
  background: linear-gradient(#fff, #e6ebf5 28%, #d2d8ec 29%, #e0e5f4);
`;

const StatusBar = styled.footer`
  height: 21px;
  padding: 4px 10px 0;
  background: #f0f0f0;
`;

const Taskbar = styled.div`
  display: flex;
  gap: 4px;
  height: 40px;
  border-top: 1px solid #1a2228;
  background: linear-gradient(#6d7d88 1px, #1b2930 2px, #0a0f16 6px, #070c13);
`;

const Task = styled.button<{ $running?: boolean }>`
  display: flex;
  align-items: center;
  justify-content: center;
  width: 58px;

  &:first-child {
    width: 56px;
  }

  ${({ $running }) =>
    $running &&
    css`
      && {
        border: 1px solid #7f868b;
        border-radius: 2px;
        background: linear-gradient(135deg, #767a7e, #3a3e43 50%, #22262b);
      }
    `}
`;
